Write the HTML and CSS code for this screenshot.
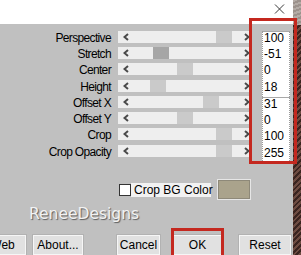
FILE: index.html
```html
<!DOCTYPE html>
<html lang="en">
<head>
    <meta charset="UTF-8">
    <title>Perspective Settings</title>
    <link rel="stylesheet" href="styles.css">
</head>
<body>
    <div class="window">
        <div class="titlebar">
            <svg class="close-icon" width="11" height="10" viewBox="0 0 11 10"><path d="M1 0.5 L10 9.5 M10 0.5 L1 9.5" stroke="#3a3a3a" stroke-width="1" fill="none"/></svg>
        </div>
        <div class="panel">
            <div class="settings">
                <div class="sliders">
                    <div class="slider-row">
                        <div class="slider-label">Perspective</div>
                        <div class="track">
                            <svg class="arrow" width="6" height="8" viewBox="0 0 6 8"><polyline points="5,1 1.5,4 5,7" stroke="#4a4a4a" stroke-width="2" fill="none"/></svg>
                            <div class="groove"><div class="thumb" style="margin-left:85px"></div></div>
                            <svg class="arrow arrow-right" width="6" height="8" viewBox="0 0 6 8"><polyline points="1,1 4.5,4 1,7" stroke="#4a4a4a" stroke-width="2" fill="none"/></svg>
                        </div>
                    </div>
                    <div class="slider-row">
                        <div class="slider-label">Stretch</div>
                        <div class="track">
                            <svg class="arrow" width="6" height="8" viewBox="0 0 6 8"><polyline points="5,1 1.5,4 5,7" stroke="#4a4a4a" stroke-width="2" fill="none"/></svg>
                            <div class="groove"><div class="thumb thumb-focus" style="margin-left:22px"></div></div>
                            <svg class="arrow arrow-right" width="6" height="8" viewBox="0 0 6 8"><polyline points="1,1 4.5,4 1,7" stroke="#4a4a4a" stroke-width="2" fill="none"/></svg>
                        </div>
                    </div>
                    <div class="slider-row">
                        <div class="slider-label">Center</div>
                        <div class="track">
                            <svg class="arrow" width="6" height="8" viewBox="0 0 6 8"><polyline points="5,1 1.5,4 5,7" stroke="#4a4a4a" stroke-width="2" fill="none"/></svg>
                            <div class="groove"><div class="thumb" style="margin-left:46px"></div></div>
                            <svg class="arrow arrow-right" width="6" height="8" viewBox="0 0 6 8"><polyline points="1,1 4.5,4 1,7" stroke="#4a4a4a" stroke-width="2" fill="none"/></svg>
                        </div>
                    </div>
                    <div class="slider-row">
                        <div class="slider-label">Height</div>
                        <div class="track">
                            <svg class="arrow" width="6" height="8" viewBox="0 0 6 8"><polyline points="5,1 1.5,4 5,7" stroke="#4a4a4a" stroke-width="2" fill="none"/></svg>
                            <div class="groove"><div class="thumb" style="margin-left:19px"></div></div>
                            <svg class="arrow arrow-right" width="6" height="8" viewBox="0 0 6 8"><polyline points="1,1 4.5,4 1,7" stroke="#4a4a4a" stroke-width="2" fill="none"/></svg>
                        </div>
                    </div>
                    <div class="slider-row">
                        <div class="slider-label">Offset X</div>
                        <div class="track">
                            <svg class="arrow" width="6" height="8" viewBox="0 0 6 8"><polyline points="5,1 1.5,4 5,7" stroke="#4a4a4a" stroke-width="2" fill="none"/></svg>
                            <div class="groove"><div class="thumb" style="margin-left:72px"></div></div>
                            <svg class="arrow arrow-right" width="6" height="8" viewBox="0 0 6 8"><polyline points="1,1 4.5,4 1,7" stroke="#4a4a4a" stroke-width="2" fill="none"/></svg>
                        </div>
                    </div>
                    <div class="slider-row">
                        <div class="slider-label">Offset Y</div>
                        <div class="track">
                            <svg class="arrow" width="6" height="8" viewBox="0 0 6 8"><polyline points="5,1 1.5,4 5,7" stroke="#4a4a4a" stroke-width="2" fill="none"/></svg>
                            <div class="groove"><div class="thumb" style="margin-left:46px"></div></div>
                            <svg class="arrow arrow-right" width="6" height="8" viewBox="0 0 6 8"><polyline points="1,1 4.5,4 1,7" stroke="#4a4a4a" stroke-width="2" fill="none"/></svg>
                        </div>
                    </div>
                    <div class="slider-row">
                        <div class="slider-label">Crop</div>
                        <div class="track">
                            <svg class="arrow" width="6" height="8" viewBox="0 0 6 8"><polyline points="5,1 1.5,4 5,7" stroke="#4a4a4a" stroke-width="2" fill="none"/></svg>
                            <div class="groove"><div class="thumb" style="margin-left:85px"></div></div>
                            <svg class="arrow arrow-right" width="6" height="8" viewBox="0 0 6 8"><polyline points="1,1 4.5,4 1,7" stroke="#4a4a4a" stroke-width="2" fill="none"/></svg>
                        </div>
                    </div>
                    <div class="slider-row">
                        <div class="slider-label">Crop Opacity</div>
                        <div class="track">
                            <svg class="arrow" width="6" height="8" viewBox="0 0 6 8"><polyline points="5,1 1.5,4 5,7" stroke="#4a4a4a" stroke-width="2" fill="none"/></svg>
                            <div class="groove"><div class="thumb" style="margin-left:85px"></div></div>
                            <svg class="arrow arrow-right" width="6" height="8" viewBox="0 0 6 8"><polyline points="1,1 4.5,4 1,7" stroke="#4a4a4a" stroke-width="2" fill="none"/></svg>
                        </div>
                    </div>
                </div>
                <div class="values">
                    <div class="value-box">
                        <div class="value">100</div>
                        <div class="value">-51</div>
                        <div class="value">0</div>
                        <div class="value">18</div>
                    </div>
                    <div class="value-box">
                        <div class="value">31</div>
                        <div class="value">0</div>
                        <div class="value">100</div>
                        <div class="value">255</div>
                    </div>
                </div>
            </div>
            <div class="options">
                <div class="checkbox"></div>
                <div class="checkbox-label">Crop BG Color</div>
                <div class="swatch"></div>
            </div>
            <div class="brand">ReneeDesigns</div>
            <div class="buttons">
                <div class="button button-web">Web</div>
                <div class="button button-about">About...</div>
                <div class="button button-cancel">Cancel</div>
                <div class="button button-ok">OK</div>
                <div class="button button-reset">Reset</div>
            </div>
        </div>
    </div>
    <div class="edge">
        <div class="edge-top"></div>
        <div class="edge-body"></div>
    </div>
    <div class="mark mark-values"></div>
    <div class="mark mark-ok"></div>
</body>
</html>
```

FILE: styles.css
```css
body {
    margin: 0;
    width: 301px;
    height: 255px;
    overflow: hidden;
    display: flex;
    position: relative;
    font-family: 'Liberation Sans', Arial, sans-serif;
    font-size: 12px;
    color: #000000;
}
.window {
    width: 293px;
    display: flex;
    flex-direction: column;
}
.titlebar {
    height: 25px;
    background-color: #FFFFFF;
    display: flex;
    justify-content: flex-end;
    align-items: flex-start;
    padding-right: 8px;
    box-sizing: border-box;
}
.close-icon {
    margin-top: 4px;
}
.panel {
    flex: 1;
    background-color: #C0C0C0;
    display: flex;
    flex-direction: column;
}
.settings {
    display: flex;
    padding-top: 7px;
}
.sliders {
    display: flex;
    flex-direction: column;
    gap: 4.3px;
}
.slider-row {
    display: flex;
    align-items: flex-start;
    height: 12px;
}
.slider-label {
    width: 111px;
    margin-right: 7px;
    text-align: right;
    line-height: 15px;
    letter-spacing: -0.65px;
    white-space: nowrap;
}
.track {
    width: 133px;
    height: 12px;
    background-color: #EEEEEE;
    display: flex;
    align-items: center;
}
.arrow {
    margin-left: 5px;
    flex-shrink: 0;
}
.arrow-right {
    margin-left: 2px;
    margin-right: 1px;
}
.groove {
    flex: 1;
    height: 12px;
    margin-left: 2px;
    display: flex;
}
.thumb {
    width: 16px;
    height: 12px;
    background-color: #CACACA;
}
.thumb-focus {
    background-color: #A6A6A6;
}
.values {
    margin-left: 11px;
    width: 28px;
    display: flex;
    flex-direction: column;
}
.value-box {
    background-color: #FFFFFF;
    border-left: 1px dotted #9A9A9A;
    border-right: 1px dotted #9A9A9A;
    border-top: 1px solid #A8A8A8;
    box-sizing: border-box;
}
.value {
    height: 16.3px;
    line-height: 13px;
    padding-left: 1px;
}
.options {
    display: flex;
    align-items: center;
    margin-top: 16px;
    padding-left: 119px;
}
.checkbox {
    width: 12px;
    height: 12px;
    border: 1px solid #333333;
    background-color: #FFFFFF;
    box-sizing: border-box;
}
.checkbox-label {
    width: 80px;
    height: 14px;
    line-height: 14px;
    padding-left: 3px;
    box-sizing: border-box;
    background-color: #F2F2F2;
    white-space: nowrap;
}
.swatch {
    width: 34px;
    height: 21px;
    margin-left: 6px;
    background-color: #AAA38C;
    border: 1px solid #E6E6E6;
    box-shadow: inset 0 0 0 1px #8E8979;
    box-sizing: border-box;
}
.brand {
    height: 20px;
    margin-top: 4px;
    padding-left: 29px;
    line-height: 20px;
    font-family: 'DejaVu Sans', sans-serif;
    font-size: 15.5px;
    color: #F2F2F2;
    text-shadow: 1px 1px 1px #5A5A5A;
}
.buttons {
    display: flex;
    height: 20px;
    margin-top: 11px;
}
.button {
    height: 20px;
    box-sizing: border-box;
    background-color: #E1E1E1;
    border: 1px solid #F6F6F6;
    box-shadow: 0 0 0 1px #B2B2B2;
    display: flex;
    justify-content: center;
    align-items: center;
    white-space: nowrap;
}
.button-web {
    width: 47px;
    margin-left: -21px;
}
.button-about {
    width: 50px;
    margin-left: 7px;
}
.button-cancel {
    width: 43px;
    margin-left: 34px;
}
.button-ok {
    width: 49px;
    margin-left: 13px;
}
.button-reset {
    width: 52px;
    margin-left: 17px;
}
.edge {
    width: 8px;
    display: flex;
    flex-direction: column;
}
.edge-top {
    height: 25px;
    background: repeating-linear-gradient(160deg, #B4ACA6 0 2px, #9C928C 2px 4px);
}
.edge-body {
    flex: 1;
    background: repeating-linear-gradient(135deg, #3A2420 0 2px, #6E4C42 2px 4px);
}
.mark {
    position: absolute;
    border: 3px solid #C4281F;
    box-sizing: border-box;
}
.mark-values {
    left: 249px;
    top: 18px;
    width: 48px;
    height: 146px;
}
.mark-ok {
    left: 171px;
    top: 228px;
    width: 53px;
    height: 27px;
    border-bottom: none;
}
```
